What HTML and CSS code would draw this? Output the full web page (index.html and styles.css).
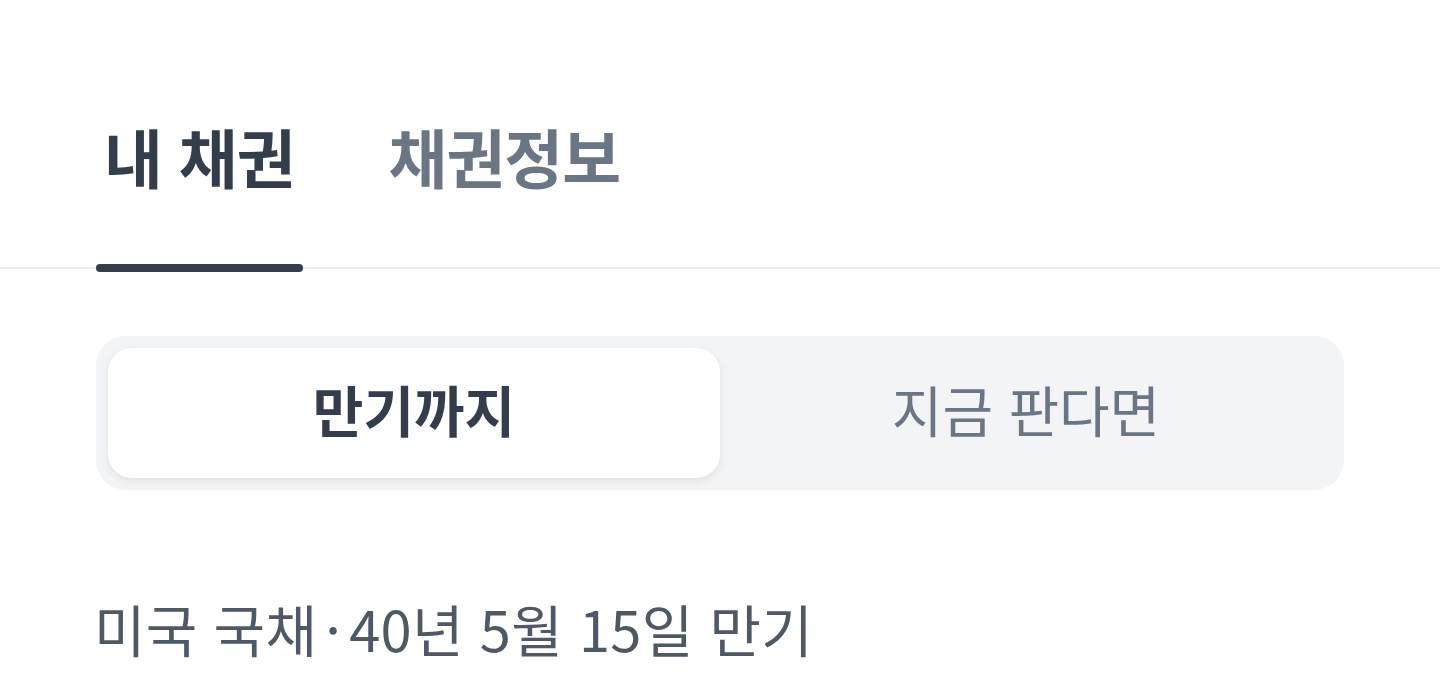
FILE: index.html
```html
<!DOCTYPE html>
<html lang="ko">
<head>
<meta charset="utf-8">
<title>내 채권</title>
<link rel="stylesheet" href="styles.css">
</head>
<body>
<nav class="tabbar">
  <div class="tab active">내 채권</div>
  <div class="tab">채권정보</div>
</nav>
<div class="segment">
  <div class="seg-item selected">만기까지</div>
  <div class="seg-item">지금 판다면</div>
</div>
<p class="caption">미국 국채<span class="dot">·</span>40년 5월 15일 만기</p>
</body>
</html>
```

FILE: styles.css
```css
html, body {
  margin: 0;
  padding: 0;
  background: #ffffff;
}
body {
  font-family: "Noto Sans CJK KR", "Noto Sans", sans-serif;
  width: 1440px;
  height: 681px;
  overflow: hidden;
}
.tabbar {
  display: flex;
  gap: 78px;
  padding: 119px 96px 0;
  border-bottom: 2px solid #eceef0;
}
.tab {
  position: relative;
  padding: 0 8px 76px;
  font-size: 64px;
  line-height: 72px;
  font-weight: 700;
  letter-spacing: -1px;
  color: #6b7684;
}
.tab.active {
  color: #333d4b;
}
.tab.active::after {
  content: "";
  position: absolute;
  left: 0;
  right: 0;
  bottom: -5px;
  height: 8px;
  border-radius: 4px;
  background: #333d4b;
}
.segment {
  display: grid;
  grid-template-columns: 1fr 1fr;
  margin: 67px 96px 0;
  padding: 12px;
  background: #f2f4f6;
  border-radius: 30px;
}
.seg-item {
  height: 120px;
  padding-bottom: 10px;
  display: flex;
  align-items: center;
  justify-content: center;
  font-size: 55px;
  color: #6b7684;
  border-radius: 24px;
}
.seg-item.selected {
  background: #ffffff;
  color: #333d4b;
  font-weight: 700;
  box-shadow: 0 3px 8px rgba(0, 0, 0, 0.08);
}
.caption {
  margin: 108px 0 0;
  padding-left: 94px;
  font-size: 56px;
  line-height: 60px;
  letter-spacing: 0.3px;
  color: #4e5968;
  white-space: nowrap;
}
.dot {
  margin: 0 8px;
}
```
